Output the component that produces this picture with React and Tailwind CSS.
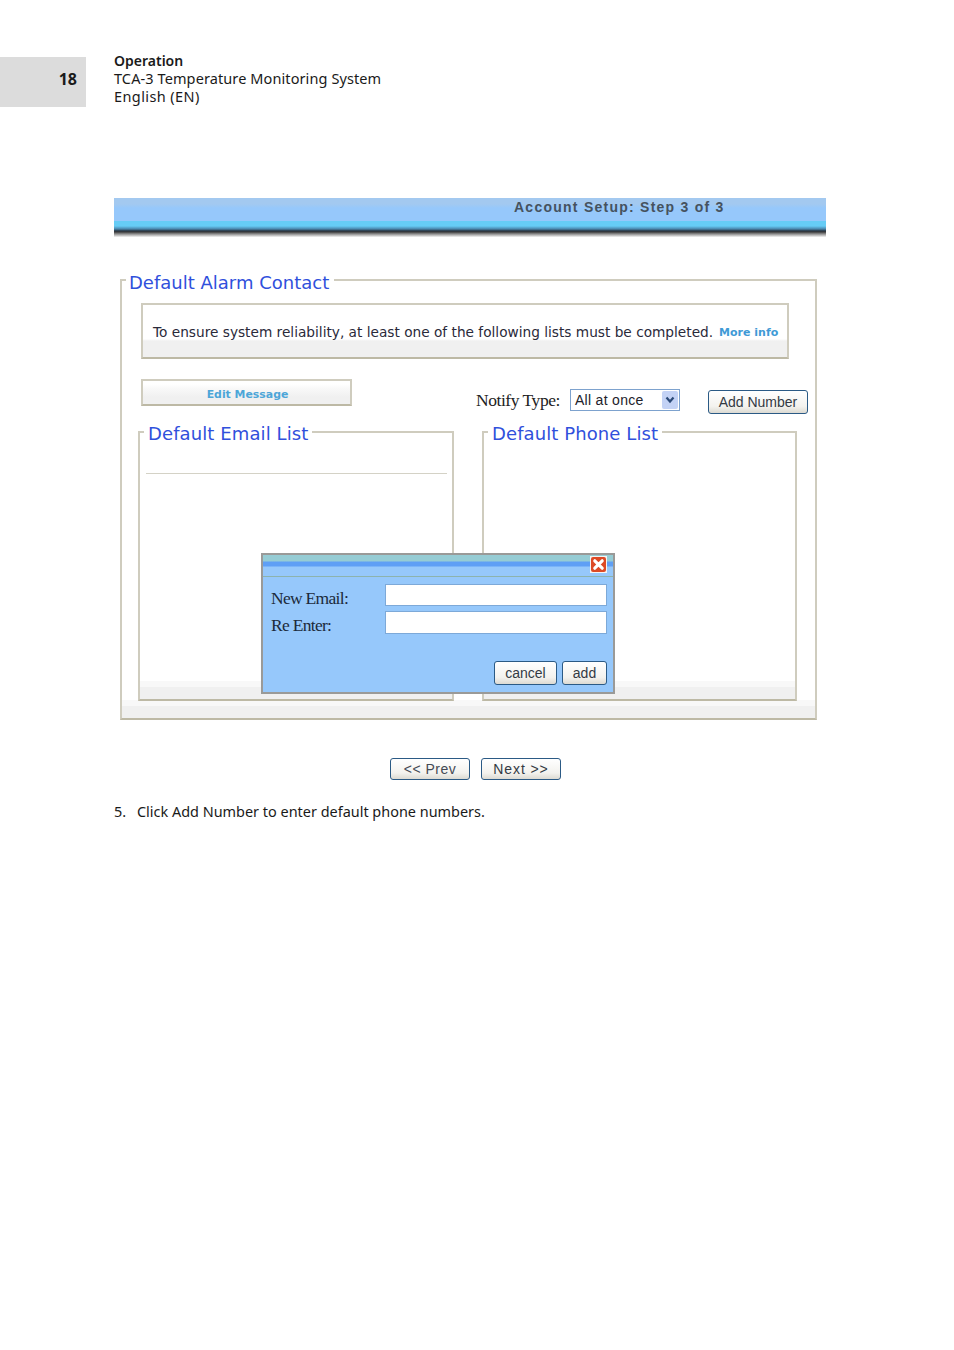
const verdana = "font-['DejaVu_Sans',sans-serif]";
const arial = "font-['Liberation_Sans',Arial,sans-serif]";
const times = "font-['Liberation_Serif','Times_New_Roman',serif]";
const noto = "font-['Noto_Sans',sans-serif]";

function Legend({ className, children }) {
  return (
    <legend className={`text-[18px] leading-[24px] text-[#3050dc] ${verdana} ${className}`}>
      {children}
    </legend>
  );
}

function WinButton({ className, children }) {
  return (
    <button
      type="button"
      className={`flex items-center justify-center rounded-[3px] border border-[#2b5a85] bg-[linear-gradient(to_bottom,#ffffff,#f3f2ee_70%,#dcdad2)] text-[14px] text-[#333a44] ${arial} ${className}`}
    >
      {children}
    </button>
  );
}

function CloseIcon() {
  return (
    <svg width="17" height="17" viewBox="0 0 17 17" aria-hidden="true">
      <rect x="0" y="0" width="17" height="17" fill="#f4f4f4" />
      <rect x="1" y="1" width="15" height="15" rx="2" fill="#dd4a26" />
      <path d="M4.8 4.8 L12.2 12.2 M12.2 4.8 L4.8 12.2" stroke="#ffffff" strokeWidth="3.2" strokeLinecap="round" />
    </svg>
  );
}

const fieldBand =
  "bg-[linear-gradient(to_top,#f0f0f0_12px,#f8f8f8_12px,#f8f8f8_18px,#ffffff_18px)]";
const edge = "border-2 border-[#cfccbe] border-b-[#bdb9a5]";

export default function App() {
  return (
    <div className="relative h-[1350px] w-[954px] overflow-hidden bg-white">
      <header className="flex pt-[51px]">
        <div className={`mt-[6px] flex h-[50px] w-[86px] items-center justify-end bg-[#dcdcdc] pb-[6px] pr-[9px] text-[16px] font-bold text-[#1a1a1a] ${noto}`}>
          18
        </div>
        <div className={`ml-[28px] text-[14.5px] leading-[18px] tracking-[0.1px] text-[#1a1a1a] ${noto}`}>
          <div className="h-[18px] pt-[1px] text-[14px] font-semibold tracking-normal">Operation</div>
          <div>TCA-3 Temperature Monitoring System</div>
          <div className="tracking-[0.4px]">English (EN)</div>
        </div>
      </header>

      <main className="ml-[114px] mt-[91px] w-[712px]">
        <div className="h-[39px] bg-[linear-gradient(to_bottom,#a3c9f0_0,#a3c9f0_6px,#96c8fb_10px,#96c8fb_23px,#66ccf6_23px,#66ccf6_28px,#4a86ad_31px,#26323e_33px,#3e3e3e_34px,#8f8f8f_36px,#f4f4f4_39px)]">
          <div className={`pl-[400px] text-[14px] font-bold leading-[18px] tracking-[1.25px] text-[#46525e] ${arial}`}>
            Account Setup: Step 3 of 3
          </div>
        </div>

        <fieldset className={`ml-[6px] mt-[28px] w-[697px] pb-[17px] pl-[16px] ${edge} ${fieldBand}`}>
          <Legend className="-ml-[12px] pl-[3px] pr-[5px] pt-[6px]">Default Alarm Contact</Legend>

          <div className={`ml-[3px] mt-[8px] flex h-[56px] w-[648px] items-start bg-[linear-gradient(to_top,#f0f0f0_16px,#ffffff_18px)] pl-[10px] pt-[17px] ${edge}`}>
            <span className={`whitespace-nowrap text-[13.7px] leading-[20px] text-[#2a2a3a] ${verdana}`}>
              To ensure system reliability, at least one of the following lists must be completed.
            </span>
            <span className={`ml-[6px] mt-[1px] whitespace-nowrap text-[11px] font-bold leading-[20px] text-[#3f9ad6] ${verdana}`}>
              More info
            </span>
          </div>

          <div className="flex h-[58px] items-start pt-[20px]">
            <button
              type="button"
              className={`ml-[3px] h-[27px] w-[211px] bg-[linear-gradient(to_bottom,#ffffff_3px,#f8f8f8_8px,#f0f0f0_16px)] pl-[2px] pt-[5px] text-[10.9px] font-bold text-[#4da6d8] ${edge} ${verdana}`}
            >
              Edit Message
            </button>
            <span className={`ml-[124px] mt-[9px] text-[17.5px] leading-[24px] tracking-[-0.45px] text-[#222222] ${times}`}>
              Notify Type:
            </span>
            <div className={`ml-[10px] mt-[10px] flex h-[22px] w-[110px] items-center justify-between border border-[#7da2ce] bg-white pl-[4px] pr-[1px] text-[14px] tracking-[0.3px] text-[#22222a] ${arial}`}>
              <span>All at once</span>
              <span className="flex h-[18px] w-[16px] items-center justify-center rounded-[2px] bg-[#c3d2f5]">
                <svg width="10" height="8" viewBox="0 0 10 8" aria-hidden="true">
                  <path d="M1.5 1.5 L5 5.5 L8.5 1.5" fill="none" stroke="#2b4a78" strokeWidth="2.2" />
                </svg>
              </span>
            </div>
            <WinButton className="ml-[28px] mt-[11px] h-[24px] w-[100px]">Add Number</WinButton>
          </div>

          <div className="flex gap-[28px]">
            <fieldset className={`h-[284px] w-[316px] ${edge} ${fieldBand}`}>
              <Legend className="ml-[4px] px-[4px] pt-[5px] tracking-[0.1px]">Default Email List</Legend>
              <div className="ml-[6px] mt-[27px] h-[1px] w-[301px] bg-[#d4d2c6]" />
            </fieldset>
            <fieldset className={`h-[284px] w-[315px] ${edge} ${fieldBand}`}>
              <Legend className="ml-[4px] px-[4px] pt-[5px] tracking-[0.1px]">Default Phone List</Legend>
            </fieldset>
          </div>
        </fieldset>

        <div className="mt-[38px] flex gap-[11px] pl-[276px]">
          <WinButton className="h-[22px] w-[80px] tracking-[0.5px] text-[#444a55]">&lt;&lt; Prev</WinButton>
          <WinButton className="h-[22px] w-[80px] tracking-[0.9px]">Next &gt;&gt;</WinButton>
        </div>

        <p className={`mt-[23px] flex text-[14.45px] leading-[18px] text-[#1a1a1a] ${noto}`}>
          <span className="w-[23px]">5.</span>
          <span>Click Add Number to enter default phone numbers.</span>
        </p>
      </main>

      <div className="absolute left-[261px] top-[553px] flex h-[141px] w-[354px] flex-col border-2 border-[#9a9a98] bg-[#96c8fb]">
        <div className="flex h-[22px] justify-end border-b border-[#8db3ad] bg-[linear-gradient(to_bottom,#96ccd4_0,#96ccd4_6px,#5f9ff5_7px,#5f9ff5_11px,#96c8fb_12px)] pr-[6px] pt-[1px]">
          <CloseIcon />
        </div>
        <div className="flex-1 pl-[8px] pr-[6px] pt-[7px]">
          <div className="flex h-[27px] items-start">
            <label className={`mt-[3px] w-[114px] text-[17.5px] leading-[22px] tracking-[-0.7px] text-[#1c2a3a] ${times}`}>New Email:</label>
            <div className="h-[22px] w-[223px] border border-[#7da9d8] bg-white" />
          </div>
          <div className="flex h-[27px] items-start">
            <label className={`mt-[3px] w-[114px] text-[17.5px] leading-[22px] tracking-[-0.7px] text-[#1c2a3a] ${times}`}>Re Enter:</label>
            <div className="h-[23px] w-[223px] border border-[#7da9d8] bg-white" />
          </div>
          <div className="mt-[23px] flex justify-end gap-[5px]">
            <WinButton className="h-[24px] w-[63px]">cancel</WinButton>
            <WinButton className="h-[24px] w-[45px]">add</WinButton>
          </div>
        </div>
      </div>
    </div>
  );
}
